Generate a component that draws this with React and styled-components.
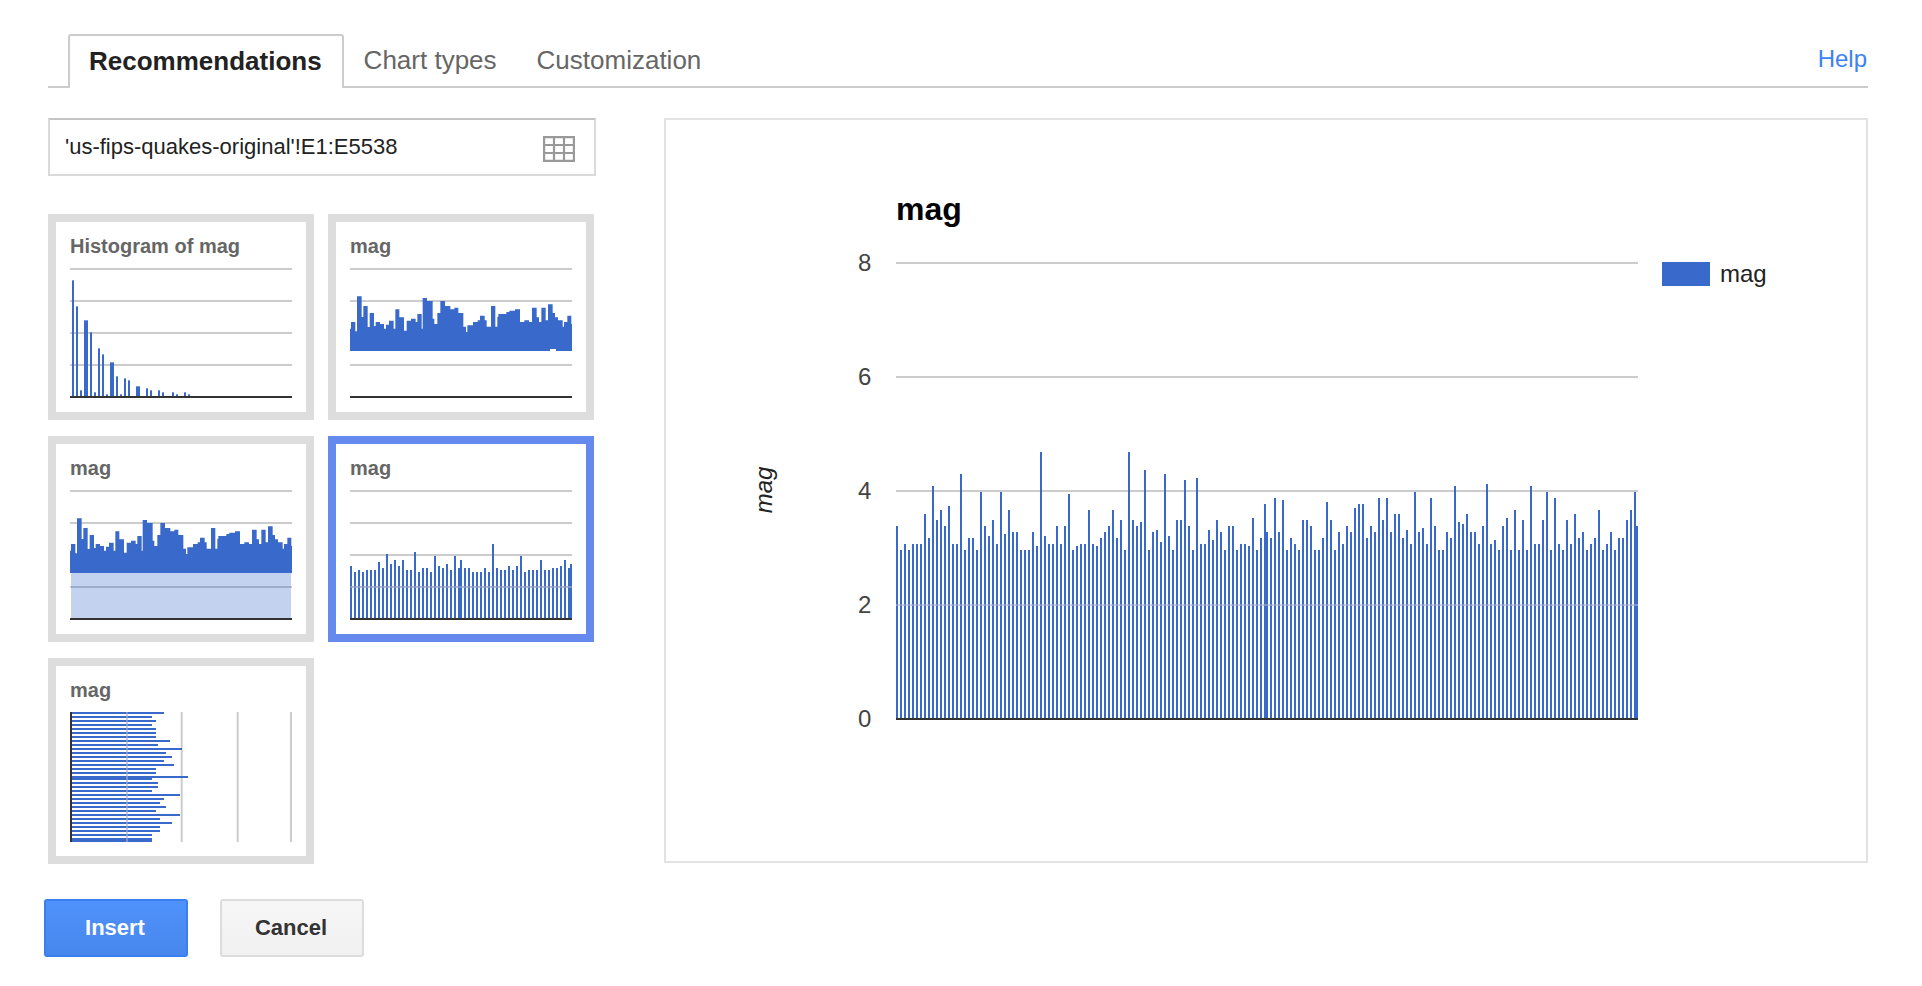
import React from "react";
import styled, { createGlobalStyle } from "styled-components";

const BLUE = "#3869cb";
const GRID = "#cccccc";
const AXIS = "#333333";
const GRID_OVER_BARS = "#a3b0c9";

// main chart: top of each column, as read off the reference
const mainTops = [
  969, 1036, 1019, 1036, 1019, 1019, 1019, 935, 1002, 857, 952, 924, 969, 913, 1019, 1019, 823, 1036, 1002, 1002,
  1036, 874, 969, 997, 952, 1019, 874, 991, 924, 986, 986, 1036, 1036, 1036, 986, 1025, 762, 997, 1019, 1019,
  969, 1019, 969, 879, 1036, 1025, 1019, 1019, 924, 1019, 1025, 1002, 986, 969, 924, 1002, 952, 1036, 762, 952,
  969, 958, 812, 1036, 986, 980, 1014, 823, 997, 1036, 952, 952, 840, 969, 1036, 834, 1019, 1019, 980, 1008,
  952, 986, 1036, 969, 969, 1036, 1019, 1019, 1025, 946, 1036, 1002, 907,
];
const mainTopsRight = [
  986, 1002, 890, 986, 896, 1036, 1002, 1019, 1036, 952, 952, 969, 1036, 1036, 1002, 902, 952, 1036, 986, 1019,
  969, 986, 918, 907, 907, 1002, 969, 986, 890, 952, 890, 986, 935, 935, 1002, 980, 1019, 874, 986, 974,
  1019, 890, 969, 1036, 1036, 986, 1002, 857, 958, 963, 935, 986, 986, 1019, 969, 851, 1019, 1008, 1036, 969,
  946, 1036, 924, 1036, 952, 1036, 857, 1019, 1019, 952, 874, 1036, 890, 1019, 1036, 952, 1019, 935, 1002, 986,
  1036, 1019, 1002, 924, 1036, 1019, 986, 1036, 1002, 1002, 952, 924, 874,
];

// x, width, top of the histogram thumbnail
const histogram = [
  [96, 6, 225], [108, 6, 303], [120, 6, 555], [132, 12, 345], [150, 6, 381], [162, 6, 561], [174, 6, 429],
  [186, 6, 447], [198, 6, 567], [210, 12, 471], [228, 6, 513], [240, 6, 567], [252, 6, 519], [264, 6, 525],
  [288, 12, 543], [318, 6, 549], [330, 6, 555], [354, 6, 555], [366, 6, 561], [396, 6, 561], [408, 6, 567],
  [432, 6, 561], [444, 6, 567],
];

// outline of the stacked thumbnails, as [x, top]
const outline = [
  [90, 370], [93, 350], [106, 378], [111, 273], [125, 335], [130, 302], [143, 365], [149, 323], [162, 362],
  [167, 350], [180, 356], [192, 370], [198, 358], [207, 346], [221, 370], [226, 312], [238, 336], [252, 376],
  [260, 346], [273, 340], [287, 350], [292, 326], [305, 370], [308, 278], [321, 287], [338, 340], [343, 356],
  [352, 323], [361, 287], [375, 302], [391, 312], [403, 307], [415, 323], [430, 364], [438, 380], [442, 360],
  [459, 350], [473, 345], [480, 331], [494, 345], [500, 364], [513, 302], [526, 364], [532, 334], [535, 326],
  [559, 320], [568, 316], [585, 312], [600, 350], [613, 345], [627, 350], [636, 307], [650, 336], [657, 350],
  [664, 307], [677, 345], [684, 297], [698, 323], [705, 336], [714, 345], [728, 364], [732, 350], [742, 331],
  [754, 356],
];

const columnTops = [
  408, 426, 420, 426, 420, 420, 420, 396, 414, 372, 402, 390, 408, 390, 420, 420, 366, 426, 414, 414, 426, 378,
  408, 414, 402, 420, 378, 414,
];
const columnTopsRight = [
  390, 414, 414, 426, 426, 426, 414, 426, 342, 414, 420, 420, 408, 420, 408, 378, 426, 420, 420, 420, 390, 420,
  420, 414, 414, 408, 390, 414, 402,
];

const rowEnds = [
  402, 366, 378, 366, 378, 378, 378, 420, 384, 456, 408, 426, 402, 432, 378, 378, 474, 366, 384, 384, 366, 450,
  402, 390, 408, 378, 450, 390, 426, 390, 390, 366, 366,
];
const rowStarts = [
  186, 198, 210, 222, 234, 246, 258, 270, 282, 294, 306, 318, 330, 342, 354, 366, 378, 384, 396, 408, 420, 432,
  444, 456, 468, 480, 492, 504, 516, 528, 540, 552, 564,
];

const GlobalStyle = createGlobalStyle`
  html, body {
    margin: 0;
    background: #ffffff;
  }
  body {
    font-family: "Liberation Sans", Arial, sans-serif;
  }
`;

const Page = styled.div`
  width: 1922px;
  height: 986px;
  box-sizing: border-box;
  padding: 34px 54px 0 44px;
  overflow: hidden;
`;

const TabBar = styled.div`
  display: flex;
  align-items: flex-start;
  height: 52px;
  margin-left: 4px;
  padding-left: 20px;
  border-bottom: 2px solid ${GRID};
`;

const Tab = styled.div`
  display: flex;
  align-items: center;
  box-sizing: border-box;
  height: 52px;
  padding: 0 20px;
  font-size: 26px;
  color: #666666;
  background: #ffffff;
`;

const ActiveTab = styled(Tab)`
  height: 54px;
  padding: 0 20px 2px 19px;
  font-weight: 700;
  color: #222222;
  border: 2px solid ${GRID};
  border-bottom: 0;
  border-radius: 3px 3px 0 0;
`;

const HelpLink = styled.a`
  margin: 0 1px 0 auto;
  line-height: 50px;
  font-size: 24px;
  color: #3b82f6;
`;

const Body = styled.div`
  display: flex;
  gap: 68px;
  margin: 30px 0 0 4px;
`;

const LeftColumn = styled.div`
  width: 548px;
  flex: none;
`;

const RangeBox = styled.div`
  display: flex;
  align-items: center;
  justify-content: space-between;
  box-sizing: border-box;
  height: 58px;
  padding: 0 19px 0 15px;
  border: 2px solid #dadada;
  border-top-color: #c4c4c4;
  font-size: 22px;
  color: #222222;
`;

const GridSvg = styled.svg`
  margin-top: 4px;
`;

const ThumbGrid = styled.div`
  display: grid;
  grid-template-columns: 266px 266px;
  grid-auto-rows: 206px;
  column-gap: 14px;
  row-gap: 16px;
  margin-top: 38px;
`;

const Thumb = styled.div`
  box-sizing: border-box;
  padding: 0 14px;
  background: #ffffff;
  border: 8px solid ${(p) => (p.$selected ? "#6689ee" : "#dddddd")};
`;

const ThumbTitle = styled.div`
  height: 46px;
  line-height: 48px;
  font-size: 20px;
  font-weight: 700;
  color: #666666;
  white-space: nowrap;
`;

const ThumbSvg = styled.svg`
  display: block;
  width: 222px;
  height: 130px;
`;

const ChartPanel = styled.div`
  flex: none;
  box-sizing: border-box;
  width: 1204px;
  height: 745px;
  border: 2px solid #e2e2e2;
`;

const ChartSvg = styled.svg`
  display: block;
  width: 1200px;
  height: 741px;
`;

const ChartTitle = styled.text`
  font-size: 32px;
  font-weight: 700;
  fill: #000000;
`;

const AxisLabel = styled.text`
  font-size: 24px;
  fill: #444444;
`;

const AxisTitle = styled.text`
  font-size: 24px;
  font-style: italic;
  fill: #222222;
`;

const LegendLabel = styled.text`
  font-size: 24px;
  fill: #222222;
`;

const Footer = styled.div`
  display: flex;
  gap: 32px;
  margin-top: 35px;
`;

const Button = styled.button`
  box-sizing: border-box;
  width: 144px;
  height: 58px;
  padding: 0 2px 0 0;
  border-radius: 3px;
  font-family: inherit;
  font-size: 22px;
  font-weight: 700;
  color: ${(p) => (p.$primary ? "#ffffff" : "#333333")};
  border: 2px solid ${(p) => (p.$primary ? "#3a7ff0" : "#dcdcdc")};
  background: ${(p) => (p.$primary ? "linear-gradient(#4f92fb, #4787ed)" : "linear-gradient(#f6f6f6, #f1f1f1)")};
`;

function GridIcon() {
  return (
    <GridSvg width="32" height="26" viewBox="0 0 32 26" fill="none" stroke="#999999" strokeWidth="2.2">
      <path d="M1.1 1.1h29.8v23.8H1.1zM1.1 9h29.8M1.1 17h29.8M11 1.1v23.8M21 1.1v23.8" />
    </GridSvg>
  );
}

// horizontal rules of a thumbnail, at the four gridlines and the axis
function ThumbGrids() {
  return (
    <>
      {[0, 32, 64, 96].map((y) => (
        <rect key={y} x="0" y={y} width="222" height="2" fill={GRID} />
      ))}
      <rect x="0" y="128" width="222" height="2" fill={AXIS} />
    </>
  );
}

function HistogramThumb() {
  return (
    <ThumbSvg viewBox="0 0 222 130">
      <ThumbGrids />
      {histogram.map(([x, w, top]) => (
        <rect key={x} x={(x - 90) / 3} y={(top - 188) / 3} width={w / 3} height={128 - (top - 188) / 3} fill={BLUE} />
      ))}
      <rect x="0" y="128" width="222" height="2" fill={AXIS} />
    </ThumbSvg>
  );
}

function StackedThumb({ shaded }) {
  const base = (437 - 188) / 3;
  const points = [`0,${base}`];
  outline.forEach(([x, top], i) => {
    const px = (x - 90) / 3;
    const nextX = i < outline.length - 1 ? (outline[i + 1][0] - 90) / 3 : 222;
    const py = (top - 188) / 3;
    points.push(`${px},${py}`, `${nextX},${py}`);
  });
  points.push(`222,${base}`);
  return (
    <ThumbSvg viewBox="0 0 222 130">
      <ThumbGrids />
      {shaded && <rect x="1" y={base} width="220" height={128 - base} fill="#c3d2ee" />}
      {shaded && <rect x="1" y="96" width="220" height="2" fill="#9fadc8" />}
      <polygon points={points.join(" ")} fill={BLUE} />
      {!shaded && <rect x="200" y={base - 2} width="6" height="2" fill="#ffffff" />}
      <rect x="0" y="128" width="222" height="2" fill={AXIS} />
    </ThumbSvg>
  );
}

function ColumnThumb() {
  const left = columnTops.map((top, i) => [i * 4, top]);
  const right = columnTopsRight.map((top, i) => [(i < 28 ? 110 + i * 4 : 110 + 27 * 4 + 2), top]);
  return (
    <ThumbSvg viewBox="0 0 222 130">
      <ThumbGrids />
      {[...left, ...right].map(([x, top], i) => (
        <rect key={i} x={x} y={(top - 180) / 3} width="2" height={128 - (top - 180) / 3} fill={BLUE} />
      ))}
      <rect x="0" y="96" width="222" height="2" fill={GRID_OVER_BARS} opacity="0.6" />
      <rect x="0" y="128" width="222" height="2" fill={AXIS} />
    </ThumbSvg>
  );
}

function RowThumb() {
  return (
    <ThumbSvg viewBox="0 0 222 130">
      {[180.7, 236.7, 290].map((x) => (
        <rect key={x} x={x - 70} y="0" width="2" height="130" fill={GRID} />
      ))}
      {rowEnds.map((end, i) => (
        <rect key={i} x="2" y={(rowStarts[i] - 186) / 3} width={(end - 126) / 3} height={i === 32 ? 4 : 2} fill={BLUE} />
      ))}
      <rect x="56" y="0" width="2" height="130" fill={GRID_OVER_BARS} opacity="0.6" />
      <rect x="0" y="0" width="2" height="130" fill={AXIS} />
    </ThumbSvg>
  );
}

function MainChart() {
  const topY = (d) => Math.round(180 + d / 2.8) - 120;
  const base = 598;
  const bars = [
    ...mainTops.map((d, i) => [230 + i * 4, d]),
    ...mainTopsRight.map((d, i) => [600 + i * 4, d]),
    [970, 969],
  ];
  const labels = [
    ["8", 142],
    ["6", 256],
    ["4", 370],
    ["2", 484],
    ["0", 598],
  ];
  return (
    <ChartSvg viewBox="0 0 1200 741">
      <ChartTitle x="230" y="100">mag</ChartTitle>
      {labels.map(([text, y]) => (
        <AxisLabel key={text} x="192" y={y + 9}>{text}</AxisLabel>
      ))}
      <AxisTitle transform="translate(106 370) rotate(-90)" textAnchor="middle">mag</AxisTitle>
      {labels.slice(0, 3).map(([text, y]) => (
        <rect key={text} x="230" y={y} width="742" height="2" fill={GRID} />
      ))}
      {bars.map(([x, d]) => (
        <rect key={x} x={x} y={topY(d)} width="2" height={base - topY(d)} fill={BLUE} />
      ))}
      <rect x="230" y="484" width="742" height="2" fill={GRID_OVER_BARS} opacity="0.6" />
      <rect x="230" y="598" width="742" height="2" fill={AXIS} />
      <rect x="996" y="142" width="48" height="24" fill={BLUE} />
      <LegendLabel x="1054" y="162">mag</LegendLabel>
    </ChartSvg>
  );
}

export default function App() {
  return (
    <Page>
      <GlobalStyle />
      <TabBar>
        <ActiveTab>Recommendations</ActiveTab>
        <Tab>Chart types</Tab>
        <Tab>Customization</Tab>
        <HelpLink>Help</HelpLink>
      </TabBar>
      <Body>
        <LeftColumn>
          <RangeBox>
            <span>'us-fips-quakes-original'!E1:E5538</span>
            <GridIcon />
          </RangeBox>
          <ThumbGrid>
            <Thumb>
              <ThumbTitle>Histogram of mag</ThumbTitle>
              <HistogramThumb />
            </Thumb>
            <Thumb>
              <ThumbTitle>mag</ThumbTitle>
              <StackedThumb />
            </Thumb>
            <Thumb>
              <ThumbTitle>mag</ThumbTitle>
              <StackedThumb shaded />
            </Thumb>
            <Thumb $selected>
              <ThumbTitle>mag</ThumbTitle>
              <ColumnThumb />
            </Thumb>
            <Thumb>
              <ThumbTitle>mag</ThumbTitle>
              <RowThumb />
            </Thumb>
          </ThumbGrid>
        </LeftColumn>
        <ChartPanel>
          <MainChart />
        </ChartPanel>
      </Body>
      <Footer>
        <Button $primary>Insert</Button>
        <Button>Cancel</Button>
      </Footer>
    </Page>
  );
}
